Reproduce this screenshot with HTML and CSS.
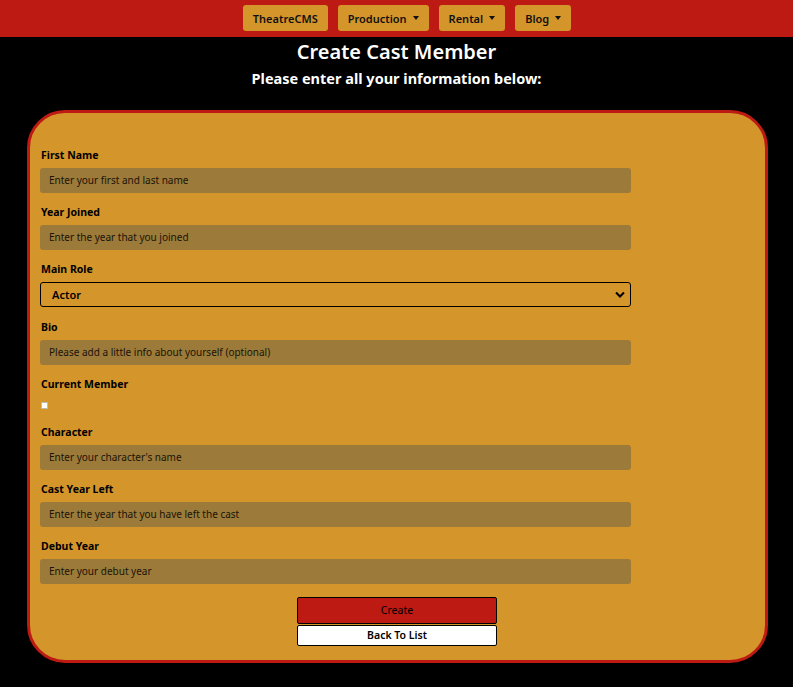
FILE: index.html
```html
<!DOCTYPE html>
<html>
<head>
<meta charset="utf-8">
<link rel="stylesheet" href="styles.css">
</head>
<body>
<nav class="topbar">
  <a class="nav-btn">TheatreCMS</a>
  <a class="nav-btn">Production <span class="caret"></span></a>
  <a class="nav-btn">Rental <span class="caret"></span></a>
  <a class="nav-btn">Blog <span class="caret"></span></a>
</nav>
<header class="page-head">
  <h1 class="title">Create Cast Member</h1>
  <h2 class="subtitle">Please enter all your information below:</h2>
</header>
<main class="card">
  <div class="group">
    <label class="lbl">First Name</label>
    <div class="field">Enter your first and last name</div>
  </div>
  <div class="group">
    <label class="lbl">Year Joined</label>
    <div class="field">Enter the year that you joined</div>
  </div>
  <div class="group">
    <label class="lbl">Main Role</label>
    <div class="select"><span>Actor</span>
      <svg class="chev" width="10" height="7" viewBox="0 0 10 7"><path d="M1 1.5 L5 5.5 L9 1.5" fill="none" stroke="#000" stroke-width="2"/></svg>
    </div>
  </div>
  <div class="group">
    <label class="lbl">Bio</label>
    <div class="field">Please add a little info about yourself (optional)</div>
  </div>
  <div class="group">
    <label class="lbl">Current Member</label>
    <div class="check-row"><span class="check"></span></div>
  </div>
  <div class="group">
    <label class="lbl">Character</label>
    <div class="field">Enter your character's name</div>
  </div>
  <div class="group">
    <label class="lbl">Cast Year Left</label>
    <div class="field">Enter the year that you have left the cast</div>
  </div>
  <div class="group">
    <label class="lbl">Debut Year</label>
    <div class="field">Enter your debut year</div>
  </div>
  <div class="actions">
    <button class="btn btn-create">Create</button>
    <button class="btn btn-back">Back To List</button>
  </div>
</main>
</body>
</html>
```

FILE: styles.css
```css
* { box-sizing: border-box; }
body {
  margin: 0;
  background: #000;
  font-family: "Noto Sans", "Open Sans", sans-serif;
  color: #000;
  height: 687px;
  overflow: hidden;
}
.topbar {
  height: 37px;
  background: #bd1a14;
  display: flex;
  justify-content: center;
  align-items: flex-start;
  gap: 10px;
  padding-top: 5px;
  padding-left: 21px;
}
.nav-btn {
  height: 26px;
  background: #d4952a;
  border-radius: 3px;
  padding: 0 10px;
  font-size: 11px;
  font-weight: 600;
  display: flex;
  align-items: center;
  gap: 6px;
  color: #111;
}
.caret {
  width: 0; height: 0;
  border-left: 3.5px solid transparent;
  border-right: 3.5px solid transparent;
  border-top: 4px solid #111;
}
.page-head {
  text-align: center;
  color: #fff;
  height: 73px;
  padding-top: 1px;
}
.title {
  margin: 0;
  font-size: 20px;
  font-weight: 600;
  line-height: 28px;
}
.subtitle {
  margin: 0;
  font-size: 14.5px;
  font-weight: 700;
  line-height: 24px;
}
.card {
  margin-left: 27px;
  width: 741px;
  height: 553px;
  background: #d4952a;
  border: 3px solid #bd1a14;
  border-radius: 38px;
  padding: 35px 0 0 10px;
}
.group {
  width: 591px;
  margin-bottom: 12.2px;
}
.lbl {
  display: block;
  font-size: 10.5px;
  font-weight: 700;
  line-height: 15px;
  margin-bottom: 5px;
  padding-left: 1px;
}
.field {
  height: 25px;
  background: #9c7a39;
  border-radius: 3px;
  font-size: 10px;
  line-height: 25px;
  padding-left: 9px;
  color: #1a1408;
}
.select {
  height: 25px;
  border: 1px solid #000;
  border-radius: 3px;
  display: flex;
  align-items: center;
  justify-content: space-between;
  padding: 0 5px 0 11px;
  font-size: 11px;
  font-weight: 600;
}
.check-row {
  height: 16px;
  padding-top: 5px;
  padding-left: 1px;
}
.check {
  display: block;
  width: 7px;
  height: 7px;
  background: #fff;
  border: 1px solid #bbb;
}
.actions {
  display: flex;
  flex-direction: column;
  align-items: center;
  width: 714px;
  gap: 1px;
}
.btn {
  width: 200px;
  border: 1px solid #000;
  border-radius: 2px;
  font-family: inherit;
  font-size: 10.5px;
  color: #000;
  padding: 0;
}
.btn-create {
  height: 27px;
  background: #bd1a14;
}
.btn-back {
  height: 21px;
  background: #fff;
  font-weight: 600;
}
```
